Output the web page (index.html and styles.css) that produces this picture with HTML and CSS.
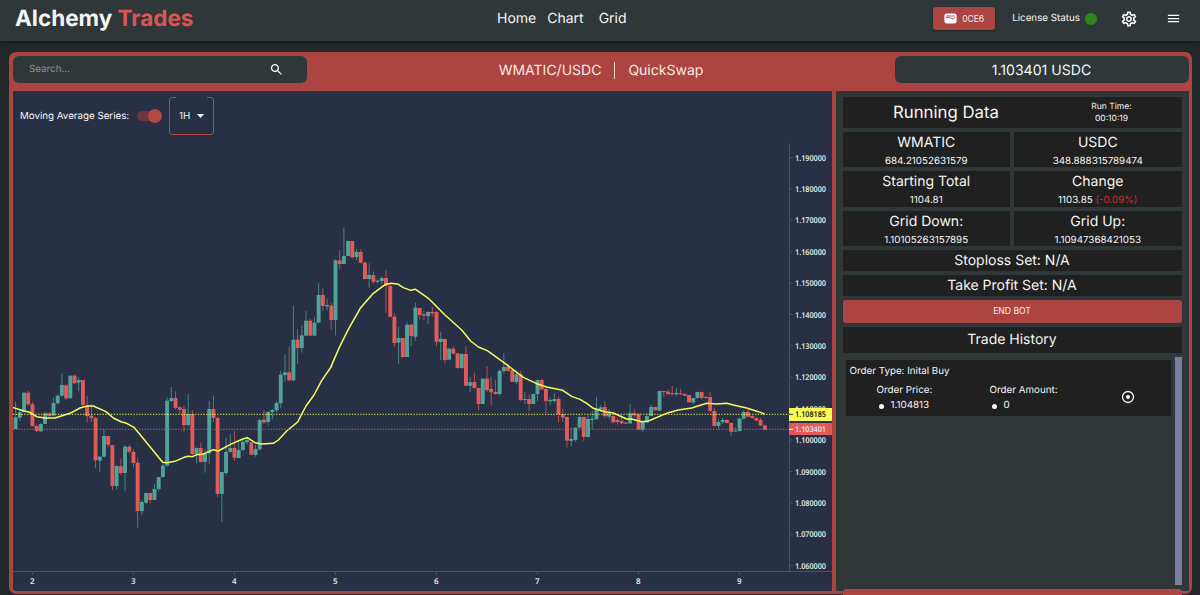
FILE: index.html
```
<!DOCTYPE html>
<html lang="en">
<head>
    <meta charset="UTF-8">
    <meta name="viewport" content="width=device-width, initial-scale=1.0">
    <title>Alchemy Trades</title>
    <link rel="stylesheet" href="styles.css">
</head>
<body>
    <header class="navbar">
        <h1 class="logo">Alchemy <span>Trades</span></h1>
        <nav class="nav-links">
            <a>Home</a>
            <a>Chart</a>
            <a>Grid</a>
        </nav>
        <div class="nav-actions">
            <button class="wallet">
                <svg width="13" height="11" viewBox="0 0 13 11"><rect x="0.4" y="0.4" width="12.2" height="10.2" rx="2.4" fill="#fff"/><path d="M2 3h9M2 4.600h4.200q1.600 1.600 3.200 1L11 4.600" fill="none" stroke="#ac4442" stroke-width="0.9"/></svg>
                0CE6
            </button>
            <div class="license">License Status <span class="dot"></span></div>
            <svg class="gear" width="18" height="18" viewBox="0 0 24 24" fill="#fff"><path d="M19.430 12.980c.04-.32.07-.64.07-.98s-.03-.66-.07-.98l2.110-1.650c.19-.15.24-.42.12-.64l-2-3.460c-.09-.16-.26-.25-.44-.25-.06 0-.12.01-.17.03l-2.490 1c-.52-.4-1.080-.73-1.690-.98l-.38-2.650C14.460 2.180 14.250 2 14 2h-4c-.25 0-.46.18-.49.42l-.38 2.650c-.61.25-1.170.59-1.690.98l-2.490-1c-.06-.02-.12-.03-.18-.03-.17 0-.34.09-.43.25l-2 3.460c-.13.22-.07.49.12.64l2.110 1.650c-.04.32-.07.65-.07.98s.03.66.07.98l-2.110 1.650c-.19.15-.24.42-.12.64l2 3.460c.09.16.26.25.44.25.06 0 .12-.01.17-.03l2.490-1c.52.4 1.080.73 1.690.98l.38 2.650c.03.24.24.42.49.42h4c.25 0 .46-.18.49-.42l.38-2.650c.61-.25 1.170-.59 1.690-.98l2.490 1c.06.02.12.03.18.03.17 0 .34-.09.43-.25l2-3.460c.12-.22.07-.49-.12-.64l-2.110-1.650zm-1.980-1.710c.04.31.05.52.05.73 0 .21-.02.43-.05.73l-.14 1.130.89.7 1.080.84-.7 1.210-1.270-.51-1.040-.42-.9.68c-.43.32-.84.56-1.250.73l-1.060.43-.16 1.130-.2 1.350h-1.400l-.19-1.350-.16-1.130-1.060-.43c-.43-.18-.83-.41-1.230-.71l-.91-.7-1.060.43-1.270.51-.7-1.210 1.080-.84.89-.7-.14-1.130c-.03-.31-.05-.54-.05-.74s.02-.43.05-.73l.14-1.130-.89-.7-1.080-.84.7-1.210 1.270.51 1.040.42.9-.68c.43-.32.84-.56 1.250-.73l1.060-.43.16-1.130.2-1.350h1.390l.19 1.350.16 1.130 1.060.43c.43.18.83.41 1.230.71l.91.7 1.060-.43 1.270-.51.7 1.210-1.070.85-.89.7.14 1.130zM12 8c-2.210 0-4 1.790-4 4s1.790 4 4 4 4-1.790 4-4-1.790-4-4-4zm0 6c-1.100 0-2-.9-2-2s.9-2 2-2 2 .9 2 2-.9 2-2 2z"/></svg>
            <svg class="menu" width="15" height="15" viewBox="0 0 24 24" fill="#fff"><path d="M3 18h18v-2H3v2zm0-5h18v-2H3v2zm0-7v2h18V6H3z"/></svg>
        </div>
    </header>

    <main class="dashboard">
        <div class="topbar">
            <div class="search">
                <span>Search...</span>
                <svg width="15" height="15" viewBox="0 0 24 24" fill="#fff"><path d="M15.500 14h-.79l-.28-.27C15.410 12.590 16 11.110 16 9.500 16 5.910 13.090 3 9.500 3S3 5.910 3 9.500 5.910 16 9.500 16c1.610 0 3.090-.59 4.230-1.570l.27.28v.79l5 4.990L20.490 19l-4.990-5zm-6 0C7.010 14 5 11.990 5 9.500S7.010 5 9.500 5 14 7.010 14 9.500 11.990 14 9.500 14z"/></svg>
            </div>
            <div class="pair"><span>WMATIC/USDC</span><i></i><span>QuickSwap</span></div>
            <div class="price">1.103401 USDC</div>
        </div>

        <div class="content">
            <section class="chart-panel">
                <div class="chart-tools">
                    <span>Moving Average Series:</span>
                    <span class="switch"></span>
                    <div class="interval">1H <svg width="7" height="4" viewBox="0 0 7 4"><path d="M0 0h7L3.500 4z" fill="#fff"/></svg></div>
                </div>
                <svg class="chart" id="chart" width="819" height="449" viewBox="13 141 819 449"></svg>
            </section>

            <aside class="side">
                <div class="card running">
                    <h2>Running Data</h2>
                    <p>Run Time:<br>00:10:19</p>
                </div>
                <div class="stats">
                    <div class="card"><h3>WMATIC</h3><p>684.21052631579</p></div>
                    <div class="card"><h3>USDC</h3><p>348.888315789474</p></div>
                    <div class="card"><h3>Starting Total</h3><p>1104.81</p></div>
                    <div class="card"><h3>Change</h3><p>1103.85 <span class="loss">(-0.09%)</span></p></div>
                    <div class="card"><h3>Grid Down:</h3><p>1.10105263157895</p></div>
                    <div class="card"><h3>Grid Up:</h3><p>1.10947368421053</p></div>
                </div>
                <div class="card line">Stoploss Set: N/A</div>
                <div class="card line">Take Profit Set: N/A</div>
                <button class="end-bot">END BOT</button>
                <div class="card history-title">Trade History</div>
                <div class="history">
                    <div class="order">
                        <p>Order Type: Inital Buy</p>
                        <div class="order-row">
                            <dl><dt>Order Price:</dt><dd>1.104813</dd></dl>
                            <dl><dt>Order Amount:</dt><dd>0</dd></dl>
                            <svg width="14" height="14" viewBox="0 0 14 14"><circle cx="7" cy="7" r="5.500" fill="none" stroke="#fff" stroke-width="1.300"/><circle cx="7" cy="7" r="2" fill="#fff"/></svg>
                        </div>
                    </div>
                    <div class="scrollbar"></div>
                </div>
                <div class="next-button"></div>
            </aside>
        </div>
    </main>
    <script src="chart.js"></script>
</body>
</html>
```
FILE: styles.css
```
* {
    box-sizing: border-box;
}
body {
    margin: 0;
    height: 595px;
    overflow: hidden;
    background-color: #222829;
    color: #f4f5f5;
    font-family: Inter, sans-serif;
    text-rendering: geometricPrecision;
}
h1, h2, h3, p, dl, dd {
    margin: 0;
    font-weight: 400;
}
button {
    border: none;
    color: #fbeeee;
    font-family: inherit;
    background-color: #ac4442;
    border-radius: 3px;
}
.navbar {
    display: grid;
    grid-template-columns: 482px auto 1fr;
    height: 41px;
    padding: 0 19px 4px 15px;
    align-items: center;
    background-color: #303738;
    box-shadow: 0 1px 4px rgba(0, 0, 0, 0.5);
}
.logo {
    font-size: 22.5px;
    font-weight: 700;
    line-height: 35px;
}
.logo span {
    color: #d95652;
}
.nav-links {
    display: flex;
    gap: 11px;
    font-size: 14px;
    line-height: 35px;
}
.nav-links a:last-child {
    margin-left: 4px;
}
.nav-actions {
    display: flex;
    justify-content: flex-end;
    align-items: center;
    font-size: 9.8px;
}
.wallet {
    display: flex;
    align-items: center;
    justify-content: center;
    gap: 5px;
    width: 62px;
    height: 23px;
    font-size: 8.5px;
    box-shadow: 0 1px 2px rgba(0, 0, 0, 0.4);
}
.license {
    display: flex;
    align-items: center;
    gap: 5px;
    margin-left: 17px;
}
.dot {
    width: 12px;
    height: 12px;
    border-radius: 50%;
    background-color: #30851d;
}
.gear {
    margin-left: 23px;
}
.menu {
    margin-left: 28px;
}
.dashboard {
    width: 1183px;
    height: 542px;
    margin: 11px 0 0 9px;
    padding: 4px 3px 3px 4px;
    border-radius: 7px;
    background-color: #ac4442;
}
.topbar {
    display: flex;
    justify-content: space-between;
    height: 35px;
}
.search, .price {
    display: flex;
    align-items: center;
    width: 294px;
    height: 27px;
    border-radius: 6px;
    background-color: #303738;
}
.search {
    justify-content: space-between;
    padding: 0 23px 0 16px;
    font-size: 9.8px;
    color: #8d9192;
}
.price {
    justify-content: center;
    padding: 1px 1px 0 0;
    font-size: 14.1px;
}
.pair {
    display: flex;
    align-items: center;
    gap: 13px;
    height: 28px;
    font-size: 14px;
    color: #ffe9e0;
}
.pair i {
    width: 1px;
    height: 17px;
    background-color: #ffd9cf;
}
.content {
    display: flex;
    gap: 4px;
    height: 500px;
}
.chart-panel {
    width: 819px;
    background-color: #273044;
    border-bottom-left-radius: 3px;
}
.chart-tools {
    display: flex;
    align-items: center;
    height: 50px;
    padding-left: 7px;
    font-size: 9.75px;
}
.switch {
    display: flex;
    justify-content: flex-end;
    align-items: center;
    width: 25px;
    height: 10px;
    margin-left: 8px;
    border-radius: 5px;
    background-color: #69383f;
}
.switch::after {
    content: "";
    width: 14px;
    height: 14px;
    flex-shrink: 0;
    border-radius: 50%;
    background-color: #b44643;
}
.interval {
    position: relative;
    display: flex;
    align-items: center;
    justify-content: center;
    gap: 7px;
    width: 45px;
    height: 38px;
    margin-left: 7px;
    border: 1px solid #b44643;
    border-radius: 3px;
}
.interval::before {
    content: "";
    position: absolute;
    top: -1px;
    left: 6px;
    right: 6px;
    height: 1px;
    background-color: #273044;
}
.chart {
    display: block;
}
.chart text {
    font-family: "Noto Sans", sans-serif;
    font-size: 8px;
    font-weight: 600;
    fill: #e2e4e8;
}
.chart .tick {
    text-anchor: middle;
}
.chart .on-yellow {
    fill: #222;
}
.side {
    position: relative;
    display: flex;
    flex-direction: column;
    gap: 4px;
    flex: 1;
    padding: 6px 7.5px 0 6.5px;
    background-color: #303738;
    text-align: center;
}
.card {
    background-color: #202020;
}
.running {
    display: grid;
    grid-template-columns: 207px 1fr;
    align-items: center;
    height: 31px;
}
.running h2 {
    padding-top: 1px;
    font-size: 16.8px;
    line-height: 30px;
}
.running p {
    padding: 1px 8px 0 0;
    font-size: 8.5px;
    line-height: 12px;
}
.stats {
    display: grid;
    grid-template-columns: 1fr 1fr;
    gap: 4px;
}
.stats .card {
    height: 35.3px;
    padding-top: 1px;
}
.stats h3 {
    font-size: 14px;
    line-height: 20px;
}
.stats p {
    font-size: 9.8px;
    line-height: 17px;
}
.loss {
    color: #c5302c;
}
.line {
    height: 21px;
    font-size: 14px;
    line-height: 22px;
}
.end-bot {
    height: 23px;
    flex-shrink: 0;
    padding-bottom: 2px;
    font-size: 8.6px;
}
.history-title {
    height: 26px;
    font-size: 14px;
    line-height: 26px;
}
.history {
    display: flex;
    justify-content: space-between;
    height: 228px;
    padding-left: 3px;
}
.order {
    width: 325px;
    height: 56px;
    margin-top: 3px;
    padding: 5px 4px 0;
    background-color: #202020;
    text-align: left;
    font-size: 9.8px;
    line-height: 14.5px;
}
.order-row {
    display: grid;
    grid-template-columns: 113px 131px 14px;
    align-items: start;
    padding: 5px 0 0 27px;
}
.order-row svg {
    margin-top: 6px;
}
.order dd {
    display: flex;
    align-items: center;
    gap: 7px;
    padding-left: 2px;
}
.order dd::before {
    content: "";
    width: 5px;
    height: 5px;
    border-radius: 50%;
    background-color: #fff;
}
.scrollbar {
    width: 7px;
    background-color: #7b7e9e;
}
.next-button {
    position: absolute;
    left: 7px;
    right: 7px;
    bottom: -4px;
    height: 6px;
    border-radius: 3px 3px 0 0;
    background-color: #ac4442;
}
```
FILE: chart.js
```
// Hourly candles: direction, body top, body bottom, wick top, wick bottom.
// Values are thirds of a pixel, counted down from the base of each block.
const blocks = [
    { base: 1080, rows: `g 172 207 125 207,g 156 173 150 183,g 98 156 97 157,r 98 133 92 137,r 133 198 125 200,r 198 213 194 216,g 192 214 188 216,g 160 192 155 192,r 160 168 156 172,g 129 167 114 170,g 107 130 103 133,g 75 107 40 110,r 76 115 72 120,g 47 115 47 115,r 47 70 44 70,g 60 68 52 94,r 60 135 60 138,r 137 168 107 187,r 167 174 132 186,r 174 301 172 325,g 290 302 288 335,g 228 290 208 292,r 228 254 228 262,r 255 378 255 390,g 318 378 315 388,r 319 339 295 345,g 260 339 255 394,r 260 275 254 280,r 276 309 268 322,r 308 453 292 503,g 426 453 420 466,g 399 428 399 433,r 399 420 399 430,g 387 420 372 420,g 351 387 351 395,g 317 351 310 353,g 122 317 113 320,g 114 123 80 126,r 114 144 94 148,r 142 149 139 162,r 147 195 138 216,g 162 195 102 200,r 162 282 150 285,g 264 282 262 310,r 264 306 247 308,g 280 306 268 338,g 147 280 122 312,r 147 174 107 186,r 174 402 170 412,g 336 402 336 486,g 276 339 232 345,g 264 276 222 278,r 264 293 214 302,g 270 294 245 294,g 245 270 240 274,g 240 247 230 254,r 247 284 247 286,g 267 285 255 290,g 180 268 176 272,r 179 187 150 192,g 156 186 154 196,g 150 156 148 178,g 129 151 122 158` },
    { base: 600, rows: `g 524 610 512 625,g 517 525 463 545,r 517 541 440 543,g 419 541 317 543,r 419 444 388 492,g 406 444 376 458,g 362 407 333 407,r 362 407 355 407,g 368 407 350 407,g 285 368 250 370,r 285 318 265 334,g 315 319 295 332,r 317 360 308 390,g 181 360 178 407,r 181 192 150 208,g 168 192 84 192,g 123 168 122 168,r 123 172 123 175,g 156 171 148 180,r 156 188 148 190,r 188 237 184 238,g 225 237 190 263,r 225 245 214 252,g 242 246 238 250,g 234 243 228 252,r 234 258 210 338,r 258 350 250 352,r 350 429 340 441,g 414 428 380 492,r 414 471 414 473,g 374 471 368 471,r 374 408 372 438,g 323 410 308 422,r 324 345 324 358,r 343 347 333 360,g 336 348 334 372,r 336 340 320 350` },
    { base: 780, rows: `r 156 245 153 258,g 236 246 215 300,r 237 300 235 310,g 266 299 264 300,r 266 281 260 283,r 280 324 280 327,g 282 324 280 326,r 282 377 258 378,g 366 377 350 396,r 366 384 338 386,r 384 432 384 450,g 356 432 354 432,r 356 390 318 396,r 387 397 350 436,r 396 402 360 404,g 333 402 328 406,g 321 333 280 340,r 321 332 310 336,r 330 366 328 366,g 343 366 335 372,r 343 420 332 424,g 417 420 396 432,r 417 432 404 454,g 402 432 400 432,g 360 402 358 424,r 360 388 356 390,r 387 423 385 460,g 420 424 412 436,g 417 423 400 430,r 417 462 410 486,r 462 473 446 486,r 471 542 470 563,g 537 543 502 558,g 503 540 502 546,g 471 503 466 504,r 471 531 470 543,g 477 531 466 533,g 476 480 453 506` },
    { base: 1020, rows: `g 208 238 171 238,g 202 208 196 216,r 201 228 184 234,g 220 230 208 236,r 228 247 226 250,r 240 246 234 254,r 243 250 226 252,r 248 251 246 252,g 220 250 193 252,r 220 226 208 232,r 222 269 220 269,g 246 269 244 275,g 228 248 220 248,g 201 228 193 228,r 201 211 200 212,g 153 212 152 212,r 153 156 153 170,r 155 162 148 166,r 160 163 138 166,g 159 163 144 168,r 160 163 146 166,r 162 167 160 168,r 165 187 164 188,g 174 187 174 194,g 156 174 155 176,r 156 174 155 178,r 171 174 168 176,r 171 213 156 218,r 213 258 203 260,g 246 258 238 266,g 240 246 234 252,r 240 249 238 250,r 249 275 248 288,g 272 275 262 276,g 236 273 234 275,g 216 236 210 238,r 216 230 208 232,r 228 234 226 236,r 234 242 232 243,r 240 256 234 258,r 256 269 255 270` }
];

// Moving average: block origin, then points in the same units
const average = [
    [0, 1080, "38,142 72,153 87,156 110,170 135,174 165,174 210,160 240,144 262,138 280,138 318,155 340,174 365,186 380,190 402,202 488,307 500,308 525,304 552,292 564,289"],
    [540, 1080, "38,290 50,284 68,283 100,269 115,273 150,254 188,237 202,233 225,248 245,252 280,250 295,240 320,213 353,186 378,138 402,105 425,62 455,18"],
    [780, 600, "213,500 238,442 265,388 302,323 340,280 376,253 395,250 415,253 430,263 452,271 467,268"],
    [1200, 780, "85,115 135,165 155,183 185,210 212,243 235,261 262,272 320,314 370,352 410,371 440,381 488,391 515,409 540,418 560,430 580,445"],
    [1680, 1020, "110,208 135,215 160,219 200,237 215,237 245,245 265,243 325,218 355,210 395,204 440,190 470,192 500,190 520,195 560,204 595,215 614,222"]
];

const colors = { g: "#4fa398", r: "#e25b58" };
let out = "";

// axes
out += '<path d="M789.5 143V571.5M13 571.5H832" fill="none" stroke="#4b5263"/>';
for (let i = 0; i < 14; i++) {
    const y = 157.5 + i * 31.4;
    out += `<path d="M789 ${y}h4" stroke="#4b5263"/><text x="795" y="${y + 3}" textLength="31" lengthAdjust="spacingAndGlyphs">${(1.19 - i * 0.01).toFixed(6)}</text>`;
}
for (let i = 0; i < 8; i++) {
    const x = 32.4 + i * 101;
    out += `<path d="M${x} 572v3" stroke="#4b5263"/><text class="tick" x="${x}" y="584">${i + 2}</text>`;
}

// candles
let index = 0;
blocks.forEach(block => {
    block.rows.split(",").forEach(row => {
        const [dir, ...values] = row.split(" ");
        const [top, bottom, high, low] = values.map(v => (block.base + Number(v)) / 3);
        const x = 15.6 + index * 4.209;
        out += `<path d="M${x} ${high}V${low}" stroke="${colors[dir]}" stroke-width="0.75"/>`;
        out += `<rect x="${x - 1.95}" y="${top}" width="3.9" height="${bottom - top}" fill="${colors[dir]}"/>`;
        index++;
    });
});

// moving average
const points = average.flatMap(([ox, oy, list]) => list.split(" ").map(p => {
    const [x, y] = p.split(",").map(Number);
    return `${(ox + x) / 3},${(oy + y) / 3}`;
}));
out += `<polyline points="${points.join(" ")}" fill="none" stroke="#f8fb5c" stroke-width="1.5" stroke-linejoin="round"/>`;

// current price lines and labels
out += '<path d="M13 414.3H789" stroke="#f8fb5c" stroke-width="1" stroke-dasharray="1.3 1.5"/>';
out += '<path d="M13 429.3H789" stroke="#e25b58" stroke-width="1" stroke-dasharray="1.3 1.5"/>';
out += '<rect x="789" y="408" width="43" height="13" fill="#fbfd4f"/><path d="M789 414.3h4" stroke="#222"/><text class="on-yellow" x="795" y="417.4" textLength="31" lengthAdjust="spacingAndGlyphs">1.108185</text>';
out += '<rect x="789" y="423" width="43" height="12" fill="#e25b58"/><path d="M789 429.3h4" stroke="#fff"/><text x="795" y="432.2" textLength="31" lengthAdjust="spacingAndGlyphs">1.103401</text>';

document.getElementById("chart").innerHTML = out;
```
